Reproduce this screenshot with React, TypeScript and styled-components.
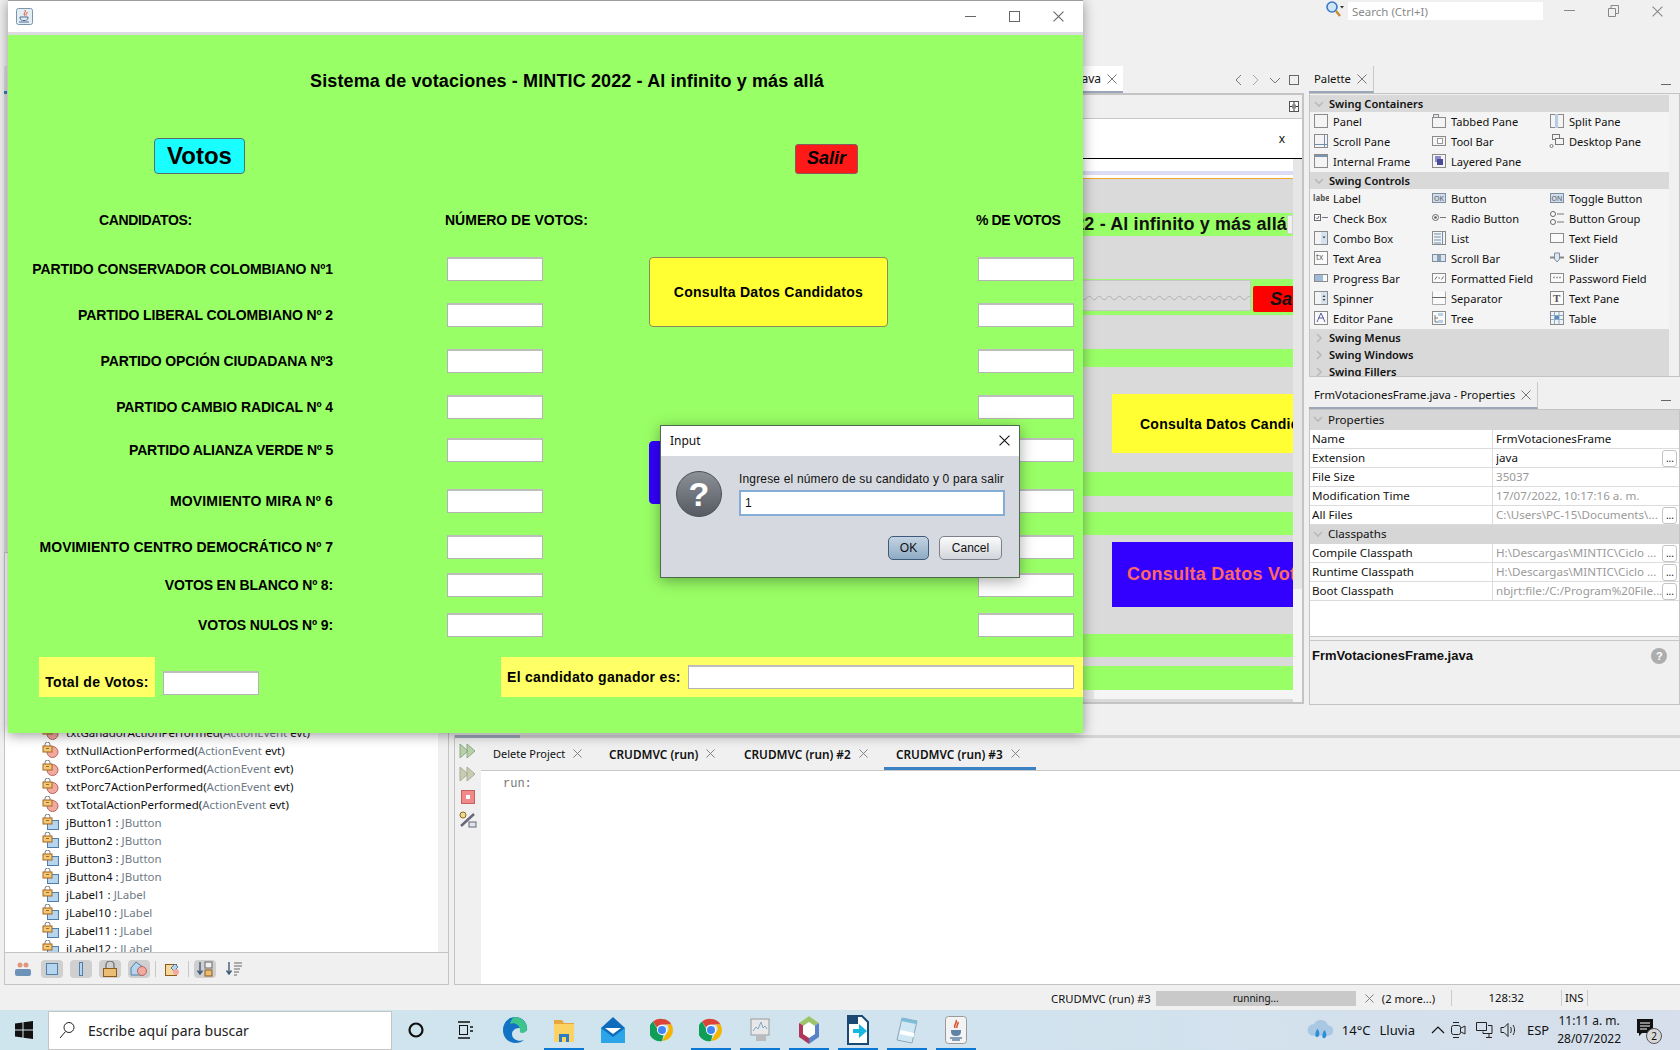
import React from 'react';
import styled, { createGlobalStyle } from 'styled-components';

const UI = `'Noto Sans', 'Open Sans', sans-serif`;
const JAVA = `'Liberation Sans', Arial, sans-serif`;

const GlobalStyle = createGlobalStyle`
  html, body { margin: 0; padding: 0; background: #f0f0f0; }
  * { box-sizing: border-box; }
  #root { width: 1680px; height: 1050px; }
`;

// ---------- small drawings ----------
const CloseGlyph = ({ size = 10, color = '#777' }: { size?: number; color?: string }) => (
  <svg width={size} height={size} viewBox="0 0 10 10"><path d="M.5.5l9 9M9.5.5l-9 9" stroke={color} strokeWidth="1" fill="none" /></svg>
);

const LockBadge = () => (
  <g>
    <path d="M3 4V2.6a2.5 2.5 0 0 1 5 0V4" fill="none" stroke="#777" strokeWidth="1" />
    <rect x="1" y="4" width="9" height="6" fill="#f0c878" stroke="#a8651c" />
    <rect x="4" y="6" width="3" height="1" fill="#a8651c" />
  </g>
);

const MethodIcon = () => (
  <svg width="17" height="16" viewBox="0 0 17 16"><circle cx="10.5" cy="10" r="5.5" fill="#f2a9a0" stroke="#b8655c" /><LockBadge /></svg>
);
const FieldIcon = () => (
  <svg width="17" height="16" viewBox="0 0 17 16"><rect x="5.5" y="6.5" width="11" height="9" fill="#b5d5ef" stroke="#4f7ea8" /><LockBadge /></svg>
);

const paletteGlyphs: Record<string, React.ReactNode> = {
  Panel: <rect x="1.5" y="1.5" width="13" height="13" fill="#f4f4f4" stroke="#8a8a8a" />,
  'Tabbed Pane': <><rect x="1.5" y="4.5" width="13" height="10" fill="#f4f4f4" stroke="#8a8a8a" /><rect x="2.5" y="1.5" width="5" height="3" fill="#dfe8f2" stroke="#8a8a8a" /></>,
  'Split Pane': <><rect x="1.5" y="1.5" width="13" height="13" fill="#f4f4f4" stroke="#8a8a8a" /><rect x="6" y="1" width="3" height="14" fill="#b7cde4" /></>,
  'Scroll Pane': <><rect x="1.5" y="1.5" width="13" height="13" fill="#f4f4f4" stroke="#8a8a8a" /><path d="M11.5 2v12M2 11.5h12" stroke="#6f8fb0" /></>,
  'Tool Bar': <><rect x="1.5" y="3.5" width="13" height="9" fill="#f4f4f4" stroke="#8a8a8a" /><rect x="6.5" y="5.5" width="5" height="5" fill="#fff" stroke="#9a9a9a" /></>,
  'Desktop Pane': <><rect x="3.5" y="1.5" width="7" height="5" fill="#f4f4f4" stroke="#777" /><rect x="6.5" y="5.5" width="8" height="6" fill="#f4f4f4" stroke="#777" /><circle cx="2.5" cy="13" r="1.5" fill="#fff" stroke="#777" /></>,
  'Internal Frame': <><rect x="1.5" y="1.5" width="13" height="13" fill="#f4f4f4" stroke="#8a8a8a" /><rect x="2" y="2" width="12" height="2" fill="#7c94ad" /></>,
  'Layered Pane': <><rect x="1.5" y="1.5" width="13" height="13" fill="#f4f4f4" stroke="#8a8a8a" /><rect x="4" y="3" width="6" height="6" fill="#8c8ccf" /><rect x="6" y="6" width="6" height="6" fill="#4b4b9c" /></>,
  Label: <text x="0" y="11" fontSize="8" fontFamily={UI} fontWeight="700" fill="#555">label</text>,
  Button: <><rect x="1.5" y="3.5" width="13" height="9" fill="#cfdceb" stroke="#7d8ea0" /><text x="3" y="11" fontSize="7" fontFamily={UI} fill="#555">OK</text></>,
  'Toggle Button': <><rect x="1.5" y="3.5" width="13" height="9" fill="#cfdceb" stroke="#7d8ea0" /><text x="2.5" y="11" fontSize="7" fontFamily={UI} fill="#555">ON</text></>,
  'Check Box': <><rect x="1.5" y="4.5" width="6" height="6" fill="#fff" stroke="#666" /><path d="M3 7.5l1.5 1.5L6 6" stroke="#668" fill="none" /><path d="M9 7.5h6" stroke="#777" /></>,
  'Radio Button': <><circle cx="4.5" cy="7.5" r="3" fill="#fff" stroke="#666" /><circle cx="4.5" cy="7.5" r="1.3" fill="#555" /><path d="M9 7.5h6" stroke="#777" /></>,
  'Button Group': <><circle cx="4" cy="4" r="2.5" fill="#fff" stroke="#666" /><circle cx="4" cy="12" r="2.5" fill="#fff" stroke="#666" /><path d="M8 4h7M8 12h7" stroke="#777" /></>,
  'Combo Box': <><rect x="1.5" y="1.5" width="13" height="13" fill="#f4f4f4" stroke="#8a8a8a" /><rect x="8" y="2" width="6" height="12" fill="#d5e2ef" /><path d="M9.5 6.5h3l-1.5 2z" fill="#444" /></>,
  List: <><rect x="1.5" y="1.5" width="13" height="13" fill="#f4f4f4" stroke="#8a8a8a" /><path d="M3 4h7M3 7h7M3 10h7M3 13h7M11.5 2v12" stroke="#6f8fb0" /></>,
  'Text Field': <rect x="1.5" y="3.5" width="13" height="9" fill="#fafafa" stroke="#8a8a8a" />,
  'Text Area': <><rect x="1.5" y="1.5" width="13" height="13" fill="#fafafa" stroke="#8a8a8a" /><text x="3" y="10" fontSize="8" fontFamily={UI} fill="#666">tx</text></>,
  'Scroll Bar': <><rect x="1.5" y="4.5" width="13" height="7" fill="#dde6ef" stroke="#7d8ea0" /><rect x="6" y="5" width="4" height="6" fill="#8aa0b6" /></>,
  Slider: <><path d="M1 7.5h14" stroke="#888" strokeWidth="2" /><path d="M5.5 3h5v6l-2.5 3-2.5-3z" fill="#dfe8f2" stroke="#7d8ea0" /></>,
  'Progress Bar': <><rect x="1.5" y="4.5" width="13" height="7" fill="#fafafa" stroke="#8a8a8a" /><rect x="2" y="5" width="8" height="6" fill="#9dbbd9" /></>,
  'Formatted Field': <><rect x="1.5" y="3.5" width="13" height="9" fill="#fafafa" stroke="#8a8a8a" /><path d="M4 9.5l2-3M7.5 8h1.5M10.5 9.5l2-3" stroke="#666" /></>,
  'Password Field': <><rect x="1.5" y="3.5" width="13" height="9" fill="#fafafa" stroke="#8a8a8a" /><path d="M4.5 7.5h1M7.5 7.5h1M10.5 7.5h1" stroke="#444" strokeWidth="1.4" /></>,
  Spinner: <><rect x="1.5" y="1.5" width="13" height="13" fill="#f4f4f4" stroke="#8a8a8a" /><rect x="8" y="2" width="6" height="12" fill="#d5e2ef" /><path d="M9.5 7h3L11 5zM9.5 9h3L11 11z" fill="#444" /></>,
  Separator: <><path d="M1.5 1.5v13h13v-13" fill="#fafafa" stroke="#aaa" /><path d="M1 7.5h14" stroke="#666" /></>,
  'Text Pane': <><rect x="1.5" y="1.5" width="13" height="13" fill="#fafafa" stroke="#8a8a8a" /><text x="4" y="12" fontSize="11" fontFamily="'Liberation Serif', serif" fontWeight="700" fill="#555">T</text></>,
  'Editor Pane': <><rect x="1.5" y="1.5" width="13" height="13" fill="#fafafa" stroke="#8a8a8a" /><path d="M4 12l4-9 4 9M5 8h6" stroke="#5a5aa8" fill="none" /></>,
  Tree: <><rect x="1.5" y="1.5" width="13" height="13" fill="#fafafa" stroke="#8a8a8a" /><path d="M4 5v7h3M4 8h3" stroke="#777" fill="none" /><rect x="7" y="3" width="5" height="3" fill="#b5cfe8" /><rect x="7" y="10" width="5" height="3" fill="#b5cfe8" /></>,
  Table: <><rect x="1.5" y="1.5" width="13" height="13" fill="#eef3f8" stroke="#8a8a8a" /><path d="M2 5.5h12M2 9.5h12M5.5 2v12M10 2v12" stroke="#8fa9c2" /><rect x="6" y="6" width="4" height="3" fill="#5a8cc4" /></>,
};

const Chevron = ({ open }: { open: boolean }) => (
  <svg width="10" height="10" viewBox="0 0 10 10">
    <path d={open ? 'M1 3l4 4 4-4' : 'M3 1l4 4-4 4'} stroke="#b9b9b9" strokeWidth="1.6" fill="none" />
  </svg>
);

const ChromeIcon = () => (
  <svg width="24" height="24" viewBox="0 0 24 24">
    <path d="M12 1a11 11 0 0 1 9.5 5.5H12A5.5 5.5 0 0 0 7 9.5L3 3.6A11 11 0 0 1 12 1z" fill="#db4437" />
    <path d="M21.5 6.5A11 11 0 0 1 12 23l4.8-8.2a5.5 5.5 0 0 0 0-8.3z" fill="#f4b400" />
    <path d="M12 23A11 11 0 0 1 3 3.6l4.7 8.2a5.5 5.5 0 0 0 5.8 5.5z" fill="#0f9d58" />
    <circle cx="12" cy="12" r="5" fill="#fff" /><circle cx="12" cy="12" r="4" fill="#4285f4" />
  </svg>
);

const taskbarIcons: React.ReactNode[] = [
  <svg key="edge" width="26" height="28" viewBox="0 0 26 28">
    <path d="M13 1C6 1 1 7 1 14c0 8 6 13 12 13 4 0 7-1 9-3-5 2-12 0-12-6 0-3 3-6 7-6 5 0 8 3 8 3 1-8-4-14-12-14z" fill="#1273c4" />
    <path d="M13 1c6 0 12 5 12 11 0 4-3 5-5 5-3 0-2-3-2-3 0-5-6-8-10-6 1-4 3-7 5-7z" fill="#3cc48a" />
  </svg>,
  <svg key="folder" width="24" height="26" viewBox="0 0 24 26">
    <path d="M2 3h8l2 3h10v6H2z" fill="#e6a83a" /><rect x="2" y="7" width="20" height="18" fill="#fcd262" />
    <rect x="7" y="17" width="10" height="8" fill="#2b7cc7" /><rect x="10" y="20" width="4" height="5" fill="#fcd262" />
  </svg>,
  <svg key="mail" width="26" height="28" viewBox="0 0 26 28">
    <path d="M13 1L1 12v15h24V12z" fill="#0f6cbd" /><path d="M1 12l12 9 12-9v15H1z" fill="#2ba4e8" /><path d="M5 12h16l-8 6z" fill="#fff" />
  </svg>,
  <ChromeIcon key="chrome1" />,
  <ChromeIcon key="chrome2" />,
  <svg key="mon" width="24" height="28" viewBox="0 0 24 28">
    <rect x="3" y="3" width="18" height="16" fill="#e8e8e8" stroke="#9a9a9a" /><path d="M5 15l3-4 2 2 3-7 2 6 2-2 2 3" stroke="#7fa8c9" fill="none" />
    <rect x="8" y="20" width="10" height="5" fill="#bbb" />
  </svg>,
  <svg key="hex" width="24" height="30" viewBox="0 0 24 30">
    <path d="M12 1l10 7v14l-10 7-10-7V8z" fill="#fff" /><path d="M12 1l10 7-10 6L2 8z" fill="#9cc46a" /><path d="M2 8l10 6v15L2 22z" fill="#b0355a" /><path d="M22 8L12 14v15l10-7z" fill="#5a82c8" />
    <path d="M12 7l6 4v8l-6 4-6-4v-8z" fill="#fff" />
  </svg>,
  <svg key="doc" width="24" height="30" viewBox="0 0 24 30">
    <path d="M2 1h14l6 6v22H2z" fill="#fff" stroke="#1a4a74" strokeWidth="2" /><path d="M2 1h10v8H2z" fill="#1a4a74" /><path d="M7 14h6V9l8 7-8 7v-5H7z" fill="#16b8e0" />
  </svg>,
  <svg key="note" width="24" height="28" viewBox="0 0 24 28">
    <path d="M7 2l15 3-5 22-15-3z" fill="#cfe8f4" stroke="#8aa9b8" /><path d="M7 2l15 3-1 3L6 5z" fill="#7dbcd9" /><path d="M5 16l14 3" stroke="#fff" strokeWidth="4" />
  </svg>,
  <svg key="java" width="24" height="30" viewBox="0 0 24 30">
    <rect x="1.5" y="1.5" width="21" height="27" rx="3" fill="#f3f3f3" stroke="#9a9a9a" /><path d="M12 5c2 3-3 4-1 8M14 7c1 2-2 3-1 6" stroke="#d8502a" fill="none" strokeWidth="1.5" />
    <path d="M7 15h10v1c0 4-2 5-5 5s-5-1-5-5z" fill="#5f83a8" /><path d="M6 23h12M8 25h8" stroke="#5f83a8" strokeWidth="1.4" />
  </svg>,
];

// ---------- page shell ----------
const Screen = styled.div`
  position: relative;
  width: 1680px;
  height: 1050px;
  overflow: hidden;
  display: flex;
  flex-direction: column;
  background: #f0f0f0;
  font-family: ${UI};
  font-size: 12px;
  color: #111;
`;

const TopBar = styled.div`
  height: 66px;
  display: flex;
  justify-content: flex-end;
  align-items: flex-start;
  padding-right: 16px;
`;
const SearchBox = styled.div`
  width: 195px;
  height: 18px;
  margin: 2px 19px 0 3px;
  padding-left: 4px;
  background: #fff;
  color: #8a8a8a;
  font-size: 11.5px;
  line-height: 19px;
`;
const IdeControl = styled.div`
  width: 14px;
  height: 22px;
  display: flex;
  align-items: center;
  justify-content: center;
  & + & { margin-left: 30px; }
`;

const IdeBody = styled.div`
  flex: 1;
  display: flex;
  min-height: 0;
`;

// ---------- left column ----------
const LeftColumn = styled.div`
  width: 454px;
  display: flex;
  flex-direction: column;
`;
const LeftStub = styled.div`
  flex: 1;
  margin-right: 447px;
  margin-left: 4px;
  background: linear-gradient(#3a78b8, #3a78b8) no-repeat 0 25px / 100% 3px, #dedede;
`;
const Navigator = styled.div`
  height: 433px;
  margin-left: 4px;
  margin-right: 5px;
  border: 1px solid #c4c4c4;
  background: #f0f0f0;
  display: flex;
  flex-direction: column;
`;
const NavList = styled.div`
  flex: 1;
  min-height: 0;
  overflow: hidden;
  background: #fff;
  padding: 170px 0 0 37px;
  border-right: 10px solid #f0f0f0;
`;
const NavRow = styled.div`
  height: 18px;
  display: flex;
  align-items: center;
  gap: 7px;
  font-size: 11.5px;
  white-space: nowrap;
  & em { font-style: normal; color: #6e7a86; }
`;
const NavToolbar = styled.div`
  height: 32px;
  border-top: 1px solid #c4c4c4;
  display: flex;
  align-items: center;
  padding: 1px 0 0 7px;
  gap: 7px;
`;
const ToolToggle = styled.div<{ $on?: boolean }>`
  width: 22px;
  height: 18px;
  border-radius: 4px;
  display: flex;
  align-items: center;
  justify-content: center;
  background: ${(p) => (p.$on ? '#cfcfcf' : 'transparent')};
`;
const ToolSep = styled.div`
  width: 1px;
  height: 16px;
  margin: 0 -2px;
  background: #c8c8c8;
`;

// ---------- centre ----------
const RightColumn = styled.div`
  flex: 1;
  min-width: 0;
  display: flex;
  flex-direction: column;
`;
const UpperRow = styled.div`
  height: 669px;
  display: flex;
`;
const EditorColumn = styled.div`
  width: 850px;
  display: flex;
  flex-direction: column;
`;
const EditorTabs = styled.div`
  height: 27px;
  display: flex;
  align-items: stretch;
  padding-left: 600px;
`;
const EditorTab = styled.div`
  width: 69px;
  display: flex;
  align-items: center;
  justify-content: flex-end;
  gap: 6px;
  padding-right: 6px;
  background: #fff;
  border-bottom: 2px solid #9aa7b8;
  font-size: 12px;
  font-family: ${UI};
`;
const NavArrows = styled.div`
  display: flex;
  align-items: center;
  padding-left: 110px;
  gap: 8px;
  & svg { flex: none; }
`;
const EditorFrame = styled.div`
  width: 850px;
  height: 611px;
  border: 2px solid #c4c4c4;
  border-left-width: 0;
  background: #f0f0f0;
  display: flex;
  flex-direction: column;
`;
const EditorStrip = styled.div`
  height: 23px;
  display: flex;
  align-items: center;
  justify-content: flex-end;
  padding-right: 3px;
`;
const EditorTitle = styled.div`
  height: 41px;
  background: #fff;
  border-top: 1px solid #c8c8c8;
  border-bottom: 1px solid #000;
  display: flex;
  align-items: center;
  justify-content: flex-end;
  padding-right: 17px;
  font-size: 12px;
`;
const PreviewWrap = styled.div`
  flex: 1;
  min-height: 0;
  display: flex;
`;
const Preview = styled.div`
  flex: 1;
  min-width: 0;
  background: #dadada;
  overflow: hidden;
  display: flex;
  flex-direction: column;
`;
const PreviewRuler = styled.div`
  height: 16px;
  flex: none;
  background: #fff;
  border-bottom: 4px solid #dcdcf4;
  box-shadow: 0 3px 0 #fff, 0 4px 0 #f5a623;
  margin-bottom: 4px;
`;
const VScroll = styled.div`
  width: 9px;
  background: linear-gradient(#e6e6e6, #e6e6e6) no-repeat 0 0 / 100% 430px, #f5f5f5;
`;
const Band = styled.div<{ $h: number; $kind: 'grey' | 'green' | 'yellow' | 'blue'; $end?: boolean }>`
  height: ${(p) => p.$h}px;
  flex: none;
  display: flex;
  align-items: ${(p) => (p.$end ? 'flex-end' : 'center')};
  white-space: nowrap;
  margin-left: ${(p) => (p.$kind === 'yellow' || p.$kind === 'blue' ? 658 : 0)}px;
  background: ${(p) =>
    p.$kind === 'green' ? '#99ff66' : p.$kind === 'yellow' ? '#ffff33' : p.$kind === 'blue' ? '#3300ff' : '#dadada'};
`;
const BandTitle = styled.div`
  flex: 1;
  text-align: right;
  font: bold 18px ${JAVA};
  letter-spacing: 0.125px;
`;
const BandTail = styled.div`
  width: 6px;
  height: 19px;
  background: #f0f0f0;
  border: 1px solid #d0d0d0;
`;
const ZigzagCell = styled.div`
  flex: 1;
  height: 31px;
  margin-bottom: 4px;
  margin-right: 2px;
  background: #dcdcdc;
  border: 1px solid #c8c8c8;
  display: flex;
  align-items: center;
  justify-content: flex-end;
`;
const PreviewSalir = styled.div`
  width: 40px;
  height: 26px;
  margin-bottom: 3px;
  background: #ff0000;
  border-radius: 2px 0 0 2px;
  font: italic bold 18px ${JAVA};
  line-height: 26px;
  padding-left: 17px;
  overflow: hidden;
`;
const PreviewButtonText = styled.div<{ $coral?: boolean }>`
  font: bold ${(p) => (p.$coral ? 18 : 14)}px ${JAVA};
  color: ${(p) => (p.$coral ? '#ff6666' : '#000')};
  padding-left: ${(p) => (p.$coral ? 15 : 28)}px;
  letter-spacing: 0.26px;
`;
const HScroll = styled.div`
  flex: none;
  height: 9px;
  background: linear-gradient(#e6e6e6, #e6e6e6) no-repeat 0 0 / 640px 100%, #f5f5f5;
`;

// ---------- right dock ----------
const Dock = styled.div`
  flex: 1;
  padding: 0 4px 0 5px;
  display: flex;
  flex-direction: column;
`;
const DockTabs = styled.div<{ $h: number }>`
  height: ${(p) => p.$h}px;
  display: flex;
  align-items: flex-end;
  justify-content: space-between;
`;
const DockTab = styled.div`
  height: 27px;
  display: flex;
  align-items: center;
  gap: 6px;
  padding: 0 6px 0 5px;
  border-bottom: 2px solid #9aa7b8;
  border-right: 1px solid #c8c8c8;
  font-size: 11.3px;
`;
const DockMin = styled.div`
  width: 10px;
  height: 1px;
  background: #666;
  margin: 0 9px 8px 0;
`;
const PalettePanel = styled.div`
  height: 284px;
  border: 1px solid #c4c4c4;
  padding: 1px 10px 0 0;
  overflow: hidden;
`;
const SectionHead = styled.div`
  height: 17px;
  background: #d9d9d9;
  display: flex;
  align-items: center;
  gap: 5px;
  padding-left: 4px;
  font-size: 11.1px;
  font-weight: 600;
`;
const PaletteGrid = styled.div`
  display: grid;
  grid-template-columns: repeat(3, 118px);
  grid-auto-rows: 20px;
  padding-left: 3px;
  background: #f4f4f4;
`;
const PaletteItem = styled.div`
  display: flex;
  align-items: center;
  gap: 4px;
  padding-bottom: 2px;
  font-size: 11.1px;
  white-space: nowrap;
`;
const PropsPanel = styled.div`
  height: 296px;
  border: 1px solid #c4c4c4;
  display: flex;
  flex-direction: column;
`;
const PropsHead = styled.div<{ $h: number }>`
  height: ${(p) => p.$h}px;
  background: #d6d6d6;
  display: flex;
  align-items: center;
  gap: 5px;
  padding: 0 0 2px 3px;
  font-size: 11.6px;
`;
const PropRow = styled.div`
  height: 19px;
  background: #fff;
  border-bottom: 1px solid #dcdcdc;
  display: grid;
  grid-template-columns: 183px 1fr;
  font-size: 11.6px;
  line-height: 17px;
`;
const PropName = styled.div`
  padding-left: 2px;
  border-right: 1px solid #dcdcdc;
`;
const PropValue = styled.div<{ $muted?: boolean }>`
  position: relative;
  padding: 0 17px 0 3px;
  white-space: nowrap;
  color: ${(p) => (p.$muted ? '#9a9a9a' : '#111')};
  & > span { display: block; overflow: hidden; }
`;
const EllipsisButton = styled.div`
  position: absolute;
  right: 2px;
  top: 1px;
  width: 15px;
  height: 17px;
  border: 1px solid #c4c4c4;
  border-radius: 3px;
  background: #fff;
  color: #222;
  font-size: 10px;
  line-height: 14px;
  text-align: center;
`;
const PropsBlank = styled.div`
  height: 36px;
  background: #fff;
  border-bottom: 1px solid #c8c8c8;
  margin-bottom: 3px;
`;
const PropsHelp = styled.div`
  flex: 1;
  border-top: 1px solid #c8c8c8;
  padding: 7px 12px 0 2px;
  display: flex;
  justify-content: space-between;
  font: bold 13px ${JAVA};
`;
const HelpBadge = styled.div`
  width: 16px;
  height: 16px;
  border-radius: 50%;
  background: #adadad;
  color: #fff;
  font-size: 11px;
  line-height: 16px;
  text-align: center;
`;

// ---------- output ----------
const OutputPane = styled.div`
  flex: 1;
  min-height: 0;
  display: flex;
  border-top: 3px solid #d4d4d4;
  border-left: 1px solid #c4c4c4;
  border-bottom: 1px solid #c4c4c4;
  position: relative;
  &::before {
    content: '';
    position: absolute;
    left: 0;
    top: -3px;
    width: 65px;
    height: 3px;
    background: #9aa7b8;
  }
`;
const OutputTools = styled.div`
  width: 26px;
  padding-top: 3px;
  display: flex;
  flex-direction: column;
  align-items: center;
  gap: 3px;
`;
const OutputMain = styled.div`
  flex: 1;
  display: flex;
  flex-direction: column;
`;
const OutputTabs = styled.div`
  height: 33px;
  display: flex;
  border-bottom: 1px solid #c8c8c8;
`;
const OutputTab = styled.div<{ $w: number; $active?: boolean; $bold?: boolean }>`
  width: ${(p) => p.$w}px;
  padding: 2px 0 0 12px;
  display: flex;
  align-items: center;
  gap: 8px;
  font-size: ${(p) => (p.$bold ? 11.8 : 11)}px;
  font-weight: ${(p) => (p.$bold ? 600 : 400)};
  white-space: nowrap;
  border-bottom: 3px solid ${(p) => (p.$active ? '#3b82c4' : 'transparent')};
`;
const OutputText = styled.div`
  flex: 1;
  background: #fff;
  padding: 6px 0 0 22px;
  font: 12px 'Liberation Mono', monospace;
  color: #777;
`;

// ---------- status and task bar ----------
const StatusBar = styled.div`
  height: 25px;
  padding: 1px 0 0 1051px;
  display: flex;
  align-items: center;
  font-size: 11.3px;
  white-space: nowrap;
`;
const ProgressTrack = styled.div`
  width: 200px;
  height: 15px;
  margin: 0 9px 0 5px;
  background: #c9c9c9;
  border-radius: 1px;
  text-align: center;
  font-size: 10px;
  line-height: 15px;
`;
const MoreLabel = styled.span`
  width: 56px;
  margin-left: 8px;
`;
const StatusCell = styled.div<{ $w: number }>`
  width: ${(p) => p.$w}px;
  height: 16px;
  line-height: 16px;
  border-right: 1px solid #ccc;
  text-align: center;
`;
const Taskbar = styled.div`
  height: 40px;
  display: flex;
  align-items: center;
  background: linear-gradient(90deg, #cfe5ee 0%, #d0e3ee 55%, #d6dfeb 100%);
`;
const StartCell = styled.div`
  width: 48px;
  display: flex;
  justify-content: center;
`;
const SearchField = styled.div`
  width: 344px;
  height: 39px;
  background: #fff;
  border: 1px solid #c5c5c5;
  display: flex;
  align-items: center;
  gap: 13px;
  padding-left: 10px;
  font-size: 14px;
  color: #222;
`;
const TaskIcon = styled.div<{ $running?: boolean; $w?: number }>`
  width: ${(p) => p.$w ?? 49}px;
  height: 40px;
  display: flex;
  align-items: center;
  justify-content: center;
  background: ${(p) => (p.$running ? 'linear-gradient(#0a78d4, #0a78d4) no-repeat center bottom / 40px 2px' : 'none')};
`;
const TrayArea = styled.div`
  margin-left: auto;
  display: flex;
  align-items: center;
  height: 40px;
  font-size: 13px;
  white-space: nowrap;
`;
const TrayIcon = styled.svg<{ $ml: number }>`
  margin-left: ${(p) => p.$ml}px;
`;
const TrayText = styled.div<{ $ml: number }>`
  margin-left: ${(p) => p.$ml}px;
`;
const Clock = styled.div`
  margin-left: 8px;
  text-align: center;
  font-size: 12px;
  line-height: 18px;
`;
const NotifyCell = styled.div`
  position: relative;
  width: 22px;
  height: 24px;
  margin: 0 22px 0 15px;
`;
const NotifyBadge = styled.div`
  position: absolute;
  right: -4px;
  bottom: -2px;
  width: 16px;
  height: 16px;
  border-radius: 50%;
  background: #d8d8d8;
  border: 1px solid #555;
  font-size: 10px;
  line-height: 14px;
  text-align: center;
`;

// ---------- running java window ----------
const JavaFrame = styled.div`
  position: absolute;
  left: 8px;
  top: 0;
  width: 1075px;
  height: 733px;
  z-index: 2;
  border-top: 1px solid #9c9c9c;
  display: flex;
  flex-direction: column;
  box-shadow: 0 2px 12px rgba(0, 0, 0, 0.4);
`;
const FrameTitle = styled.div`
  height: 31px;
  flex: none;
  background: #fff;
  display: flex;
  align-items: center;
  padding-left: 8px;
`;
const FrameControls = styled.div`
  margin-left: auto;
  display: flex;
  align-items: center;
  gap: 33px;
  padding-right: 19px;
`;
const FrameStrip = styled.div`
  height: 3px;
  flex: none;
  background: #dcdce0;
`;
const FormArea = styled.div`
  flex: 1;
  background: #99ff66;
  font-family: ${JAVA};
  font-weight: bold;
  color: #000;
  display: flex;
  flex-direction: column;
`;
const FormTitle = styled.div`
  height: 103px;
  padding: 34px 0 0 302px;
  font-size: 18px;
  line-height: 24px;
  letter-spacing: 0.125px;
  white-space: nowrap;
`;
const ActionRow = styled.div`
  height: 70px;
  display: flex;
  align-items: flex-start;
  padding-left: 146px;
`;
const VotosButton = styled.div`
  width: 91px;
  height: 36px;
  background: #19ffff;
  border: 1px solid #5c6b6b;
  border-radius: 4px;
  font-size: 24px;
  line-height: 33px;
  text-align: center;
`;
const SalirButton = styled.div`
  width: 63px;
  height: 30px;
  margin: 6px 0 0 550px;
  background: #ff1a1a;
  border: 1px solid #8a5a5a;
  border-radius: 3px;
  font-size: 18px;
  font-style: italic;
  line-height: 27px;
  text-align: center;
`;
const VoteGrid = styled.div<{ $rows: string }>`
  display: grid;
  grid-template-columns: 325px 114px 96px 106px 239px 90px 96px;
  grid-template-rows: ${(p) => p.$rows};
  font-size: 14px;
`;
const HeadCell = styled.div<{ $col: string; $pl: number; $track?: number }>`
  grid-column: ${(p) => p.$col};
  grid-row: 1;
  padding-left: ${(p) => p.$pl}px;
  letter-spacing: ${(p) => p.$track ?? 0}px;
  line-height: 24px;
  white-space: nowrap;
`;
const PartyLabel = styled.div<{ $row: number; $track: number }>`
  grid-column: 1;
  grid-row: ${(p) => p.$row};
  height: 24px;
  line-height: 24px;
  letter-spacing: ${(p) => p.$track}px;
  text-align: right;
  white-space: nowrap;
`;
const JavaInput = styled.div<{ $col?: number; $row?: number; $w?: number }>`
  ${(p) => (p.$col ? `grid-column: ${p.$col}; grid-row: ${p.$row};` : '')}
  ${(p) => (p.$w ? `width: ${p.$w}px;` : '')}
  height: 24px;
  background: #fff;
  border: 1px solid #b4b4b4;
  border-top: 2px solid #bdbdbd;
`;
const BigButton = styled.div<{ $blue?: boolean }>`
  grid-column: 4 / 6;
  margin-left: 106px;
  grid-row: ${(p) => (p.$blue ? '6 / 8' : '2 / 4')};
  margin-top: ${(p) => (p.$blue ? 3 : 0)}px;
  height: ${(p) => (p.$blue ? 63 : 70)}px;
  background: ${(p) => (p.$blue ? '#3300ff' : '#ffff33')};
  color: ${(p) => (p.$blue ? '#ff6666' : '#000')};
  border: 1px solid ${(p) => (p.$blue ? '#3300ff' : '#8a8a5a')};
  border-radius: 4px;
  display: flex;
  align-items: center;
  justify-content: center;
  font-size: ${(p) => (p.$blue ? 18 : 14)}px;
  letter-spacing: 0.26px;
  white-space: nowrap;
  overflow: hidden;
`;
const ResultRow = styled.div`
  display: flex;
  margin-top: 20px;
  padding-left: 31px;
  align-items: flex-start;
`;
const YellowBox = styled.div`
  height: 40px;
  background: #ffff66;
  font-size: 14px;
  letter-spacing: 0.3px;
  display: flex;
`;
const TotalBox = styled(YellowBox)`
  width: 116px;
  align-items: flex-end;
  justify-content: center;
  padding-bottom: 7px;
`;
const TotalInput = styled(JavaInput)`
  margin: 14px 242px 0 8px;
`;
const WinnerBox = styled(YellowBox)`
  flex: 1;
  align-items: flex-start;
  padding: 8px 9px 0 6px;
  justify-content: space-between;
  line-height: 24px;
`;

// ---------- input dialog ----------
const Dialog = styled.div`
  position: absolute;
  left: 660px;
  top: 425px;
  width: 360px;
  height: 153px;
  z-index: 3;
  border: 1px solid #4e6a4e;
  display: flex;
  flex-direction: column;
  background: #d6d9df;
  box-shadow: 0 3px 14px rgba(0, 0, 0, 0.35);
`;
const DialogTitle = styled.div`
  height: 30px;
  background: #fff;
  display: flex;
  align-items: center;
  justify-content: space-between;
  padding: 0 9px 2px;
  font-size: 12px;
`;
const DialogBody = styled.div`
  flex: 1;
  display: flex;
  padding: 15px 14px 0 15px;
  font-family: ${JAVA};
`;
const QuestionBadge = styled.div`
  width: 46px;
  height: 46px;
  flex: none;
  border-radius: 50%;
  border: 1px solid #4a4e55;
  background: linear-gradient(#8b8f96, #565b63);
  color: #fff;
  font: bold 34px/44px ${JAVA};
  text-align: center;
`;
const DialogMain = styled.div`
  flex: 1;
  margin-left: 17px;
  display: flex;
  flex-direction: column;
`;
const DialogPrompt = styled.div`
  padding-top: 1px;
  font-size: 12px;
  line-height: 15px;
  letter-spacing: 0.17px;
  white-space: nowrap;
`;
const DialogInput = styled.div`
  height: 26px;
  margin-top: 3px;
  padding-left: 4px;
  background: #fff;
  border: 2px solid #86add4;
  font-size: 12px;
  line-height: 22px;
`;
const DialogButtons = styled.div`
  display: flex;
  justify-content: flex-end;
  gap: 10px;
  margin: 20px 3px 0 0;
`;
const DialogButton = styled.div<{ $default?: boolean; $w: number }>`
  width: ${(p) => p.$w}px;
  height: 24px;
  border-radius: 5px;
  border: 1px solid ${(p) => (p.$default ? '#3f5a78' : '#7d828a')};
  background: ${(p) => (p.$default ? 'linear-gradient(#c3d3e2, #8eabc4)' : 'linear-gradient(#fbfbfb, #d2d5db)')};
  font-size: 12px;
  line-height: 22px;
  text-align: center;
`;

// ---------- data ----------
const navRows = [
  ['txtGanadorActionPerformed(', 'ActionEvent', ' evt)', 'm'],
  ['txtNullActionPerformed(', 'ActionEvent', ' evt)', 'm'],
  ['txtPorc6ActionPerformed(', 'ActionEvent', ' evt)', 'm'],
  ['txtPorc7ActionPerformed(', 'ActionEvent', ' evt)', 'm'],
  ['txtTotalActionPerformed(', 'ActionEvent', ' evt)', 'm'],
  ['jButton1 : ', 'JButton', '', 'f'],
  ['jButton2 : ', 'JButton', '', 'f'],
  ['jButton3 : ', 'JButton', '', 'f'],
  ['jButton4 : ', 'JButton', '', 'f'],
  ['jLabel1 : ', 'JLabel', '', 'f'],
  ['jLabel10 : ', 'JLabel', '', 'f'],
  ['jLabel11 : ', 'JLabel', '', 'f'],
  ['jLabel12 : ', 'JLabel', '', 'f'],
];

const containers = ['Panel', 'Tabbed Pane', 'Split Pane', 'Scroll Pane', 'Tool Bar', 'Desktop Pane', 'Internal Frame', 'Layered Pane'];
const controls = [
  'Label', 'Button', 'Toggle Button', 'Check Box', 'Radio Button', 'Button Group', 'Combo Box', 'List', 'Text Field',
  'Text Area', 'Scroll Bar', 'Slider', 'Progress Bar', 'Formatted Field', 'Password Field', 'Spinner', 'Separator',
  'Text Pane', 'Editor Pane', 'Tree', 'Table',
];

// the name and the letter-spacing that brings it to the width Java gave it
const parties: [string, number][] = [
  ['PARTIDO CONSERVADOR COLOMBIANO Nº1', -0.065],
  ['PARTIDO LIBERAL COLOMBIANO Nº 2', -0.1],
  ['PARTIDO OPCIÓN CIUDADANA Nº3', -0.13],
  ['PARTIDO CAMBIO RADICAL Nº 4', -0.12],
  ['PARTIDO ALIANZA VERDE Nº 5', -0.2],
  ['MOVIMIENTO MIRA Nº 6', 0.16],
  ['MOVIMIENTO CENTRO DEMOCRÁTICO Nº 7', 0],
  ['VOTOS EN BLANCO Nº 8:', -0.15],
  ['VOTOS NULOS Nº 9:', -0.12],
];

const props1: [string, string, boolean, boolean][] = [
  ['Name', 'FrmVotacionesFrame', false, false],
  ['Extension', 'java', false, true],
  ['File Size', '35037', true, false],
  ['Modification Time', '17/07/2022, 10:17:16 a. m.', true, false],
  ['All Files', 'C:\\Users\\PC-15\\Documents\\...', true, true],
];
const props2: [string, string, boolean, boolean][] = [
  ['Compile Classpath', 'H:\\Descargas\\MINTIC\\Ciclo ...', true, true],
  ['Runtime Classpath', 'H:\\Descargas\\MINTIC\\Ciclo ...', true, true],
  ['Boot Classpath', 'nbjrt:file:/C:/Program%20File...', true, true],
];

const PropRows = ({ rows }: { rows: [string, string, boolean, boolean][] }) => (
  <>
    {rows.map(([name, value, muted, more]) => (
      <PropRow key={name}>
        <PropName>{name}</PropName>
        <PropValue $muted={muted}>
          <span>{value}</span>
          {more && <EllipsisButton>...</EllipsisButton>}
        </PropValue>
      </PropRow>
    ))}
  </>
);

const PaletteCells = ({ names }: { names: string[] }) => (
  <PaletteGrid>
    {names.map((name) => (
      <PaletteItem key={name}>
        <svg width="16" height="16" viewBox="0 0 16 16">{paletteGlyphs[name]}</svg>
        {name}
      </PaletteItem>
    ))}
  </PaletteGrid>
);

const App = () => {
  return (
    <Screen>
      <GlobalStyle />
      <TopBar>
        <svg width="20" height="20" viewBox="0 0 20 20">
          <circle cx="7" cy="7" r="5" fill="#cfe6fa" stroke="#3a78c8" strokeWidth="1.6" />
          <path d="M11 11l4 5" stroke="#c98a2a" strokeWidth="2.4" /><path d="M15 6h4l-2 2.4z" fill="#333" />
        </svg>
        <SearchBox>Search (Ctrl+I)</SearchBox>
        <IdeControl><svg width="11" height="2"><rect width="11" height="1" fill="#888" /></svg></IdeControl>
        <IdeControl><svg width="11" height="12" viewBox="0 0 11 12"><path d="M.5 3.5h7v8h-7zM3 3V.5h7.5v8H8" fill="none" stroke="#888" /></svg></IdeControl>
        <IdeControl><CloseGlyph size={11} color="#888" /></IdeControl>
      </TopBar>

      <IdeBody>
        <LeftColumn>
          <LeftStub />
          <Navigator>
            <NavList>
              {navRows.map(([a, b, c, kind]) => (
                <NavRow key={a}>
                  {kind === 'm' ? <MethodIcon /> : <FieldIcon />}
                  <span>{a}<em>{b}</em>{c}</span>
                </NavRow>
              ))}
            </NavList>
            <NavToolbar>
              <ToolToggle>
                <svg width="18" height="16" viewBox="0 0 18 16"><circle cx="6" cy="4" r="2.5" fill="#e2967e" /><circle cx="12" cy="4" r="2.5" fill="#e2967e" /><rect x="1" y="8" width="16" height="7" rx="2" fill="#6d92b8" /></svg>
              </ToolToggle>
              <ToolToggle $on><svg width="12" height="12"><rect x=".5" y=".5" width="11" height="11" fill="#b5d5ef" stroke="#4f7ea8" /></svg></ToolToggle>
              <ToolToggle $on><svg width="6" height="14"><rect x="1.5" y=".5" width="3" height="13" fill="#b5d5ef" stroke="#4f7ea8" /></svg></ToolToggle>
              <ToolToggle $on><svg width="16" height="16" viewBox="0 0 16 16"><path d="M4 7V4a4 4 0 0 1 8 0v3" fill="none" stroke="#777" strokeWidth="1.4" /><rect x="1.5" y="7.5" width="13" height="8" fill="#e9bd72" stroke="#8e5a1c" /></svg></ToolToggle>
              <ToolToggle $on><svg width="18" height="16" viewBox="0 0 18 16"><path d="M1 14V7l5-6 8 6v7z" fill="#b5d5ef" stroke="#4f7ea8" /><circle cx="12" cy="10" r="4.5" fill="#f2a9a0" stroke="#b8655c" /></svg></ToolToggle>
              <ToolSep />
              <ToolToggle><svg width="16" height="16" viewBox="0 0 16 16"><rect x="1.5" y="3.5" width="11" height="11" fill="#f5d89a" stroke="#8e5a1c" /><path d="M7 7l4-4 3 3-4 4z" fill="#b5d5ef" stroke="#4f7ea8" /><circle cx="12" cy="11" r="3" fill="#f2a9a0" /></svg></ToolToggle>
              <ToolSep />
              <ToolToggle $on><svg width="18" height="16" viewBox="0 0 18 16"><path d="M4 1v11M1.5 9.5L4 13l2.5-3.5" fill="none" stroke="#3f5a78" strokeWidth="1.4" /><rect x="9" y="1" width="7" height="6" fill="#eee" stroke="#666" /><rect x="9" y="9" width="7" height="6" fill="#e9bd72" stroke="#8e5a1c" /></svg></ToolToggle>
              <ToolToggle><svg width="18" height="16" viewBox="0 0 18 16"><path d="M4 1v11M1.5 9.5L4 13l2.5-3.5" fill="none" stroke="#3f5a78" strokeWidth="1.4" /><path d="M9 2h8M9 5h8M9 8h6M9 11h5M9 14h3" stroke="#666" /></svg></ToolToggle>
            </NavToolbar>
          </Navigator>
        </LeftColumn>

        <RightColumn>
          <UpperRow>
            <EditorColumn>
              <EditorTabs>
                <EditorTab>ava <CloseGlyph /></EditorTab>
                <NavArrows>
                  <svg width="10" height="12"><path d="M8 1L3 6l5 5" stroke="#777" fill="none" /></svg>
                  <svg width="10" height="12"><path d="M2 1l5 5-5 5" stroke="#aaa" fill="none" /></svg>
                  <svg width="12" height="12"><path d="M1 4l5 5 5-5" stroke="#777" fill="none" /></svg>
                  <svg width="11" height="12"><rect x=".5" y="1.5" width="9" height="9" fill="none" stroke="#666" /></svg>
                </NavArrows>
              </EditorTabs>
              <EditorFrame>
                <EditorStrip>
                  <svg width="10" height="11" viewBox="0 0 10 11"><rect x=".5" y=".5" width="9" height="10" fill="#fff" stroke="#555" /><path d="M5 1v9M1 5.5h8" stroke="#333" /><rect x="3" y="3.5" width="4" height="4" fill="#888" /></svg>
                </EditorStrip>
                <EditorTitle>x</EditorTitle>
                <PreviewWrap>
                  <Preview>
                    <PreviewRuler />
                    <Band $h={34} $kind="grey" />
                    <Band $h={23} $kind="green">
                      <BandTitle>Sistema de votaciones - MINTIC 2022 - Al infinito y más allá</BandTitle>
                      <BandTail />
                    </Band>
                    <Band $h={43} $kind="grey" />
                    <Band $h={36} $kind="green" $end>
                      <ZigzagCell>
                        <svg width="170" height="10" viewBox="0 0 170 10">
                          <path d={`M0 5${Array.from({ length: 34 }, (_, i) => ` l2.5 ${i % 2 ? -3 : 3} l2.5 ${i % 2 ? -1 : 1}`).join('')}`} stroke="#b5b5b5" fill="none" />
                        </svg>
                      </ZigzagCell>
                      <PreviewSalir>Sa</PreviewSalir>
                    </Band>
                    <Band $h={34} $kind="grey" />
                    <Band $h={18} $kind="green" />
                    <Band $h={27} $kind="grey" />
                    <Band $h={59} $kind="yellow"><PreviewButtonText>Consulta Datos Candidatos</PreviewButtonText></Band>
                    <Band $h={19} $kind="grey" />
                    <Band $h={24} $kind="green" />
                    <Band $h={16} $kind="grey" />
                    <Band $h={23} $kind="green" />
                    <Band $h={7} $kind="grey" />
                    <Band $h={65} $kind="blue"><PreviewButtonText $coral>Consulta Datos Votos</PreviewButtonText></Band>
                    <Band $h={27} $kind="grey" />
                    <Band $h={23} $kind="green" />
                    <Band $h={9} $kind="grey" />
                    <Band $h={24} $kind="green" />
                    <HScroll />
                  </Preview>
                  <VScroll />
                </PreviewWrap>
              </EditorFrame>
            </EditorColumn>

            <Dock>
              <DockTabs $h={27}>
                <DockTab>Palette <CloseGlyph /></DockTab>
                <DockMin />
              </DockTabs>
              <PalettePanel>
                <SectionHead><Chevron open />Swing Containers</SectionHead>
                <PaletteCells names={containers} />
                <SectionHead><Chevron open />Swing Controls</SectionHead>
                <PaletteCells names={controls} />
                <SectionHead><Chevron open={false} />Swing Menus</SectionHead>
                <SectionHead><Chevron open={false} />Swing Windows</SectionHead>
                <SectionHead><Chevron open={false} />Swing Fillers</SectionHead>
              </PalettePanel>
              <DockTabs $h={32}>
                <DockTab>FrmVotacionesFrame.java - Properties <CloseGlyph /></DockTab>
                <DockMin />
              </DockTabs>
              <PropsPanel>
                <PropsHead $h={20}><Chevron open />Properties</PropsHead>
                <PropRows rows={props1} />
                <PropsHead $h={19}><Chevron open />Classpaths</PropsHead>
                <PropRows rows={props2} />
                <PropsBlank />
                <PropsHelp>
                  FrmVotacionesFrame.java
                  <HelpBadge>?</HelpBadge>
                </PropsHelp>
              </PropsPanel>
            </Dock>
          </UpperRow>

          <OutputPane>
            <OutputTools>
              <svg width="20" height="20" viewBox="0 0 20 20"><path d="M2 3l8 7-8 7zM9 3l8 7-8 7z" fill="#b7d0a8" stroke="#8aa888" /></svg>
              <svg width="20" height="20" viewBox="0 0 20 20"><path d="M2 3l8 7-8 7zM9 3l8 7-8 7z" fill="#c8ccb0" stroke="#a8ac98" /></svg>
              <svg width="20" height="20" viewBox="0 0 20 20"><rect x="3.5" y="3.5" width="13" height="13" fill="#f08a8a" stroke="#c86060" /><rect x="8" y="8" width="4" height="4" fill="#fff" /></svg>
              <svg width="20" height="20" viewBox="0 0 20 20"><circle cx="5" cy="5" r="3" fill="#f0d890" stroke="#8a6a20" /><path d="M3 16L16 4" stroke="#667" strokeWidth="2.4" /><rect x="11" y="12" width="7" height="5" fill="#dfe4ea" stroke="#667" /></svg>
            </OutputTools>
            <OutputMain>
              <OutputTabs>
                <OutputTab $w={116}>Delete Project <CloseGlyph size={9} /></OutputTab>
                <OutputTab $w={135} $bold>CRUDMVC (run) <CloseGlyph size={9} /></OutputTab>
                <OutputTab $w={152} $bold>CRUDMVC (run) #2 <CloseGlyph size={9} /></OutputTab>
                <OutputTab $w={152} $bold $active>CRUDMVC (run) #3 <CloseGlyph size={9} /></OutputTab>
              </OutputTabs>
              <OutputText>run:</OutputText>
            </OutputMain>
          </OutputPane>
        </RightColumn>
      </IdeBody>

      <StatusBar>
        CRUDMVC (run) #3
        <ProgressTrack>running...</ProgressTrack>
        <CloseGlyph size={9} />
        <MoreLabel>(2 more...)</MoreLabel>
        <StatusCell $w={14} />
        <StatusCell $w={110}>128:32</StatusCell>
        <StatusCell $w={26}>INS</StatusCell>
      </StatusBar>

      <Taskbar>
        <StartCell>
          <svg width="18" height="18" viewBox="0 0 18 18"><path d="M0 2.5l7.5-1v7H0zM8.5 1.3L18 0v8.5H8.5zM0 9.5h7.5v7l-7.5-1zM8.5 9.5H18V18l-9.5-1.3z" fill="#111" /></svg>
        </StartCell>
        <SearchField>
          <svg width="16" height="18" viewBox="0 0 16 18"><circle cx="10" cy="6.5" r="5" fill="none" stroke="#222" /><path d="M6.5 10.5L1 17" stroke="#222" /></svg>
          Escribe aquí para buscar
        </SearchField>
        <TaskIcon $w={48}><svg width="18" height="18"><circle cx="9" cy="9" r="6.5" fill="none" stroke="#111" strokeWidth="2.2" /></svg></TaskIcon>
        <TaskIcon $w={50}><svg width="18" height="20" viewBox="0 0 18 20"><rect x="3.5" y="5.5" width="8" height="9" fill="none" stroke="#111" /><path d="M2 2h12M2 18h12M14 7h3M14 11h3" stroke="#111" strokeWidth="1.4" /></svg></TaskIcon>
        {taskbarIcons.map((icon, i) => (
          <TaskIcon key={i} $running={i > 0 && i !== 2 && i !== 3}>{icon}</TaskIcon>
        ))}
        <TrayArea>
          <TrayIcon $ml={0} width="28" height="28" viewBox="0 0 24 24"><path d="M5 17a5 5 0 0 1 1-10 6.5 6.5 0 0 1 12 1 4.5 4.5 0 0 1 0 9z" fill="#a9c8e4" /><path d="M9 11c2 3 2.4 6 0 7s-2.500-4 0-7zM15 12c2 3 2.4 6 0 7s-2.500-4 0-7z" fill="#2d8fd5" /></TrayIcon>
          <TrayText $ml={7}>14°C</TrayText>
          <TrayText $ml={9}>Lluvia</TrayText>
          <TrayIcon $ml={16} width="14" height="10" viewBox="0 0 14 10"><path d="M1 8l6-6 6 6" fill="none" stroke="#111" strokeWidth="1.2" /></TrayIcon>
          <TrayIcon $ml={5} width="16" height="20" viewBox="0 0 16 20"><rect x="1.5" y="5.5" width="9" height="9" rx="2" fill="none" stroke="#222" /><path d="M11 8l4-2v8l-4-2M3 2.500h6M3 17.500h6" fill="none" stroke="#222" /></TrayIcon>
          <TrayIcon $ml={9} width="18" height="18" viewBox="0 0 18 18"><path d="M1.5 1.500h10v8h-10zM13 4.500h4v8h-9v-2M11 16.500h6M14 13v3" fill="none" stroke="#222" /></TrayIcon>
          <TrayIcon $ml={7} width="18" height="16" viewBox="0 0 18 16"><path d="M1 5.500h3l4-4v13l-4-4H1zM10.500 5c1 1.500 1 4.500 0 6M13 3c2 3 2 7 0 10" fill="none" stroke="#222" /></TrayIcon>
          <TrayText $ml={9}>ESP</TrayText>
          <Clock>11:11 a. m.<br />28/07/2022</Clock>
          <NotifyCell>
            <svg width="20" height="20" viewBox="0 0 20 20"><path d="M1 1h16v14H6l-3 3v-3H1z" fill="#111" /><path d="M4 5h10M4 8h10M4 11h7" stroke="#fff" /></svg>
            <NotifyBadge>2</NotifyBadge>
          </NotifyCell>
        </TrayArea>
      </Taskbar>

      <JavaFrame>
        <FrameTitle>
          <svg width="17" height="17" viewBox="0 0 17 17">
            <rect x=".5" y=".5" width="16" height="16" rx="2" fill="#e4ecf4" stroke="#7d94ad" />
            <path d="M9 2c1.500 2-2 3-.5 5.500M11 4c.5 1.500-1.500 2-1 3.500" stroke="#d8502a" fill="none" />
            <path d="M4 9h8v1c0 2-2 2.500-4 2.500S4 12 4 10zM3 14h10" fill="none" stroke="#4f6f90" />
          </svg>
          <FrameControls>
            <svg width="11" height="11"><rect y="5" width="11" height="1" fill="#666" /></svg>
            <svg width="11" height="11"><rect x=".5" y=".5" width="10" height="10" fill="none" stroke="#666" /></svg>
            <CloseGlyph size={11} color="#666" />
          </FrameControls>
        </FrameTitle>
        <FrameStrip />
        <FormArea>
          <FormTitle>Sistema de votaciones - MINTIC 2022 - Al infinito y más allá</FormTitle>
          <ActionRow>
            <VotosButton>Votos</VotosButton>
            <SalirButton>Salir</SalirButton>
          </ActionRow>
          <VoteGrid $rows="49px 46px 46px 46px 43px 51px 46px 38px 40px 24px">
            <HeadCell $col="1" $pl={91} $track={-0.35}>CANDIDATOS:</HeadCell>
            <HeadCell $col="2 / 5" $pl={112}>NÚMERO DE VOTOS:</HeadCell>
            <HeadCell $col="6 / 8" $pl={88} $track={-0.4}>% DE VOTOS</HeadCell>
            {parties.map(([party, track], i) => (
              <React.Fragment key={party}>
                <PartyLabel $row={i + 2} $track={track}>{party}</PartyLabel>
                <JavaInput $col={3} $row={i + 2} />
                <JavaInput $col={7} $row={i + 2} />
              </React.Fragment>
            ))}
            <BigButton>Consulta Datos Candidatos</BigButton>
            <BigButton $blue>Consulta Datos Votos</BigButton>
          </VoteGrid>
          <ResultRow>
            <TotalBox>Total de Votos:</TotalBox>
            <TotalInput $w={96} />
            <WinnerBox>
              El candidato ganador es:
              <JavaInput $w={386} />
            </WinnerBox>
          </ResultRow>
        </FormArea>
      </JavaFrame>

      <Dialog>
        <DialogTitle>
          Input
          <CloseGlyph size={11} color="#111" />
        </DialogTitle>
        <DialogBody>
          <QuestionBadge>?</QuestionBadge>
          <DialogMain>
            <DialogPrompt>Ingrese el número de su candidato y 0 para salir</DialogPrompt>
            <DialogInput>1</DialogInput>
            <DialogButtons>
              <DialogButton $default $w={41}>OK</DialogButton>
              <DialogButton $w={63}>Cancel</DialogButton>
            </DialogButtons>
          </DialogMain>
        </DialogBody>
      </Dialog>
    </Screen>
  );
};

export default App;
